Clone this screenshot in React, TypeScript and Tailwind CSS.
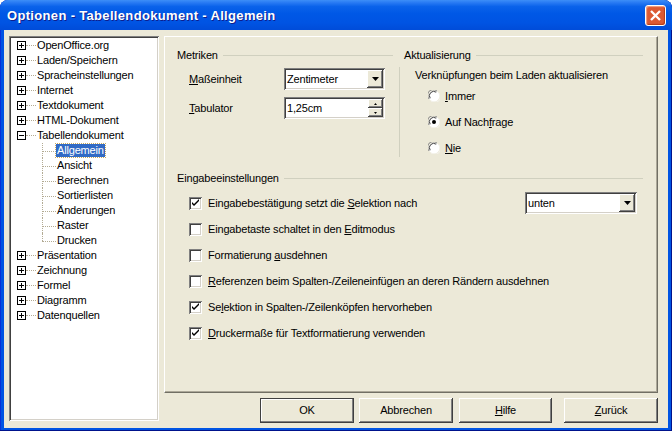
import React from 'react';

const sunken =
  'shadow-[inset_1px_1px_0_#808080,inset_-1px_-1px_0_#ffffff,inset_2px_2px_0_#404040,inset_-2px_-2px_0_#d4d0c8]';
const raised =
  'shadow-[inset_-1px_-1px_0_#404040,inset_1px_1px_0_#ffffff,inset_-2px_-2px_0_#808080,inset_2px_2px_0_#ece9d8]';

const topBefore = [
  'OpenOffice.org',
  'Laden/Speichern',
  'Spracheinstellungen',
  'Internet',
  'Textdokument',
  'HTML-Dokument',
];
const children = ['Allgemein', 'Ansicht', 'Berechnen', 'Sortierlisten', 'Änderungen', 'Raster', 'Drucken'];
const topAfter = ['Präsentation', 'Zeichnung', 'Formel', 'Diagramm', 'Datenquellen'];

function ExpandBox({ open }: { open?: boolean }) {
  return (
    <svg width="9" height="9" viewBox="0 0 9 9" className="shrink-0">
      <rect x="0.5" y="0.5" width="8" height="8" fill="#fff" stroke="#000" />
      <path d="M2 4.5h5" stroke="#000" />
      {!open && <path d="M4.5 2v5" stroke="#000" />}
    </svg>
  );
}

function TopNode({ label, open }: { label: string; open?: boolean }) {
  return (
    <div className="flex h-[15px] items-center pl-[6px]">
      <ExpandBox open={open} />
      <span className="w-[10px] border-t border-dotted border-[#b3ab94]" />
      <span className="ml-[1px] whitespace-nowrap">{label}</span>
    </div>
  );
}

function ChildNode({ label, last, selected }: { label: string; last?: boolean; selected?: boolean }) {
  return (
    <div className="flex h-[15px] items-center pl-[31px]">
      <span className="relative h-full w-[14px] shrink-0">
        <span
          className={`absolute left-0 top-0 border-l border-dotted border-[#b3ab94] ${last ? 'h-1/2' : 'h-full'}`}
        />
        <span className="absolute left-0 top-1/2 w-[14px] border-t border-dotted border-[#b3ab94]" />
      </span>
      <span
        className={`whitespace-nowrap px-[1px] leading-[13px] ${
          selected ? 'bg-[#316ac5] text-white outline outline-1 outline-dotted outline-[#c9a85c]' : ''
        }`}
      >
        {label}
      </span>
    </div>
  );
}

function Tree() {
  return (
    <div className={`h-[385px] w-[150px] shrink-0 bg-white p-[2px] ${sunken}`}>
      {topBefore.map((l) => (
        <TopNode key={l} label={l} />
      ))}
      <TopNode label="Tabellendokument" open />
      {children.map((c, i) => (
        <ChildNode key={c} label={c} selected={i === 0} last={i === children.length - 1} />
      ))}
      {topAfter.map((l) => (
        <TopNode key={l} label={l} />
      ))}
    </div>
  );
}

function GroupHeader({ title, className = '' }: { title: string; className?: string }) {
  return (
    <div className={`flex h-[13px] items-center ${className}`}>
      <span className="whitespace-nowrap">{title}</span>
      <span className="ml-[5px] h-px flex-1 bg-[#d0d0bf]" />
    </div>
  );
}

function DownArrow() {
  return (
    <svg width="7" height="4" viewBox="0 0 7 4">
      <path d="M0 0h7L3.5 4z" fill="#000" />
    </svg>
  );
}

function Combo({ value, className = '' }: { value: string; className?: string }) {
  return (
    <div className={`flex h-[22px] items-stretch bg-white p-[2px] ${sunken} ${className}`}>
      <span className="flex flex-1 items-center pl-[1px]">{value}</span>
      <span className={`flex w-[16px] items-center justify-center bg-[#ece9d8] ${raised}`}>
        <DownArrow />
      </span>
    </div>
  );
}

function Spin({ value }: { value: string }) {
  return (
    <div className={`flex h-[22px] w-[101px] items-stretch bg-white p-[2px] ${sunken}`}>
      <span className="flex flex-1 items-center pl-[1px]">{value}</span>
      <span className="flex w-[15px] flex-col">
        <span className={`flex flex-1 items-center justify-center bg-[#ece9d8] ${raised}`}>
          <svg width="3" height="2" viewBox="0 0 3 2">
            <path d="M1.5 0L3 2H0z" fill="#000" />
          </svg>
        </span>
        <span className={`flex flex-1 items-center justify-center bg-[#ece9d8] ${raised}`}>
          <svg width="3" height="2" viewBox="0 0 3 2">
            <path d="M0 0h3L1.5 2z" fill="#000" />
          </svg>
        </span>
      </span>
    </div>
  );
}

function Checkbox({ checked }: { checked?: boolean }) {
  return (
    <span className={`flex h-[13px] w-[13px] shrink-0 items-center justify-center bg-white ${sunken}`}>
      {checked && (
        <svg width="13" height="13" viewBox="0 0 13 13">
          <path d="M3 5v2l2 2 5-5V2L5 7z" fill="#000" />
        </svg>
      )}
    </span>
  );
}

function Radio({ checked }: { checked?: boolean }) {
  return (
    <svg width="12" height="12" viewBox="0 0 12 12" className="shrink-0">
      <circle cx="6" cy="6" r="5.5" fill="#fff" />
      <path d="M1.2 9A5.5 5.5 0 0 1 9 1.2" stroke="#808080" fill="none" />
      <path d="M2.2 8.2A4.3 4.3 0 0 1 8.2 2.2" stroke="#404040" fill="none" />
      <path d="M10.8 3A5.5 5.5 0 0 1 3 10.8" stroke="#f4f3ee" fill="none" />
      {checked && <circle cx="6" cy="6" r="2" fill="#000" />}
    </svg>
  );
}

function CheckRow({ checked, children: label, right }: { checked?: boolean; children: React.ReactNode; right?: React.ReactNode }) {
  return (
    <div className="flex h-[26px] items-center pl-[12px]">
      <Checkbox checked={checked} />
      <span className="ml-[6px] whitespace-nowrap">{label}</span>
      {right}
    </div>
  );
}

function RadioRow({ checked, children: label }: { checked?: boolean; children: React.ReactNode }) {
  return (
    <div className="flex h-[26px] items-center pl-[24px]">
      <Radio checked={checked} />
      <span className="ml-[5px] whitespace-nowrap">{label}</span>
    </div>
  );
}

function DlgButton({ children: label, isDefault, className = '' }: { children: React.ReactNode; isDefault?: boolean; className?: string }) {
  return (
    <div
      className={`flex h-[25px] items-center justify-center bg-[#ece9d8] ${
        isDefault
          ? 'border border-[#404040] shadow-[inset_-1px_-1px_0_#808080,inset_1px_1px_0_#ffffff]'
          : raised
      } ${className}`}
    >
      {label}
    </div>
  );
}

export default function App() {
  return (
    <div className="h-[431px] w-[672px] overflow-hidden bg-white font-['Liberation_Sans',Arial,sans-serif] text-[11px] leading-[13px] tracking-[-0.17px] text-black">
      <div className="flex h-[431px] w-[672px] flex-col overflow-hidden rounded-t-[8px] bg-[#0054e3] shadow-[inset_0_-1px_0_#00138c,inset_-1px_0_0_#00138c,inset_1px_0_0_#0831d9]">
        {/* title bar */}
        <div className="flex h-[30px] shrink-0 items-center justify-between bg-[linear-gradient(180deg,#3d8ef7_0%,#2a7cf4_8%,#0a62ea_22%,#0058e6_45%,#0054e3_75%,#004cd9_100%)] pl-[7px] pr-[6px]">
          <span className="text-[13px] font-bold tracking-[0.33px] text-white [text-shadow:1px_1px_0_#0f1e8c]">
            Optionen - Tabellendokument - Allgemein
          </span>
          <div className="flex h-[21px] w-[21px] shrink-0 items-center justify-center rounded-[3px] border border-white bg-[#dc5a33] shadow-[inset_1px_1px_1px_#f3a587,inset_-1px_-1px_1px_#b53c17]">
            <svg width="13" height="13" viewBox="0 0 13 13">
              <path d="M2 2L11 11M11 2L2 11" stroke="#ffffff" strokeWidth="2.3" />
            </svg>
          </div>
        </div>

        {/* body */}
        <div className="mx-[4px] mb-[3px] flex flex-1 bg-[#ece9d8] pl-[5px] pr-[10px] pt-[6px]">
          <Tree />

          <div className="ml-[5px] flex w-[494px] flex-col">
            <div className="h-[357px] border border-b-[#716f64] border-l-white border-r-[#716f64] border-t-white pl-[12px] pr-[14px] pt-[12px] shadow-[inset_-1px_-1px_0_#aca899]">
              <div className="flex h-[123px]">
                <div className="w-[216px]">
                  <GroupHeader title="Metriken" />
                  <div className="mt-[6px] flex h-[22px] items-center pl-[12px]">
                    <span className="w-[95px]">
                      <u>M</u>aßeinheit
                    </span>
                    <Combo value="Zentimeter" className="w-[101px]" />
                  </div>
                  <div className="mt-[7px] flex h-[22px] items-center pl-[12px]">
                    <span className="w-[95px]">
                      <u>T</u>abulator
                    </span>
                    <Spin value="1,25cm" />
                  </div>
                </div>
                <div className="ml-[6px] mt-[18px] h-[90px] w-px bg-[#d0d0bf]" />
                <div className="ml-[4px] flex-1">
                  <GroupHeader title="Aktualisierung" />
                  <div className="mt-[7px] pl-[11px]">Verknüpfungen beim Laden aktualisieren</div>
                  <div className="mt-[1px]">
                    <RadioRow>
                      <u>I</u>mmer
                    </RadioRow>
                    <RadioRow checked>
                      Auf Nach<u>f</u>rage
                    </RadioRow>
                    <RadioRow>
                      <u>N</u>ie
                    </RadioRow>
                  </div>
                </div>
              </div>

              <GroupHeader title="Eingabeeinstellungen" />
              <div className="mt-[5px]">
                <CheckRow checked right={<Combo value="unten" className="ml-auto mr-[6px] w-[112px]" />}>
                  Eingabebestätigung setzt die <u>S</u>elektion nach
                </CheckRow>
                <CheckRow>
                  Eingabetaste schaltet in den <u>E</u>ditmodus
                </CheckRow>
                <CheckRow>
                  Formatierung <u>a</u>usdehnen
                </CheckRow>
                <CheckRow>
                  <u>R</u>eferenzen beim Spalten-/Zeileneinfügen an deren Rändern ausdehnen
                </CheckRow>
                <CheckRow checked>
                  Se<u>l</u>ektion in Spalten-/Zeilenköpfen hervorheben
                </CheckRow>
                <CheckRow checked>
                  <u>D</u>ruckermaße für Textformatierung verwenden
                </CheckRow>
              </div>
            </div>

            <div className="mt-[5px] flex justify-end">
              <DlgButton isDefault className="w-[94px]">
                OK
              </DlgButton>
              <DlgButton className="ml-[5px] w-[94px]">Abbrechen</DlgButton>
              <DlgButton className="ml-[6px] w-[93px]">
                <u>H</u>ilfe
              </DlgButton>
              <DlgButton className="ml-[12px] w-[94px]">
                <u>Z</u>urück
              </DlgButton>
            </div>
          </div>
        </div>
      </div>
    </div>
  );
}
